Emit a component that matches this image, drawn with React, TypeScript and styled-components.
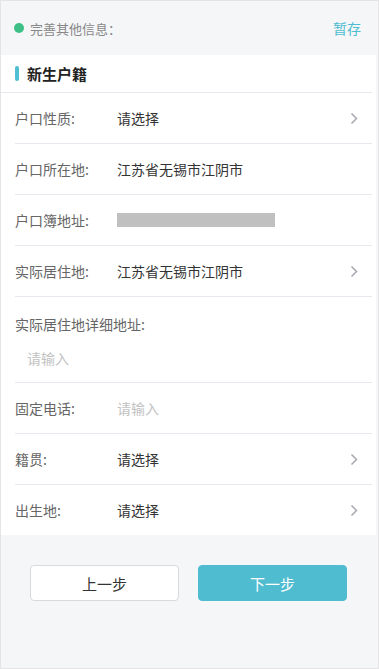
import * as React from 'react';
import styled, { createGlobalStyle } from 'styled-components';

const GlobalStyle = createGlobalStyle`
  html, body {
    margin: 0;
    padding: 0;
    background: #ffffff;
  }
  body {
    font-family: "Noto Sans CJK SC", "Noto Sans", sans-serif;
  }
  * {
    box-sizing: border-box;
  }
`;

const Page = styled.div`
  width: 379px;
  height: 669px;
  border: 1px solid #e4e4e6;
  background: #f5f6f8;
  padding-right: 2px;
  display: flex;
  flex-direction: column;
`;

const TopBar = styled.div`
  height: 54px;
  display: flex;
  align-items: center;
  justify-content: space-between;
  padding: 0 15px 0 13px;
`;

const Hint = styled.div`
  display: flex;
  align-items: center;
  font-size: 13px;
  color: #888888;
`;

const Dot = styled.span`
  width: 10px;
  height: 10px;
  border-radius: 50%;
  background: #3dbf86;
  margin-right: 6px;
`;

const SaveLink = styled.button`
  border: none;
  background: none;
  padding: 0;
  font-family: inherit;
  font-size: 14px;
  color: #4fbcd0;
  cursor: pointer;
`;

const Card = styled.div`
  background: #ffffff;
`;

const CardTitle = styled.div`
  height: 38px;
  margin-right: 4px;
  display: flex;
  align-items: center;
  padding-left: 14px;
  border-bottom: 1px solid #e8e8ee;
  font-size: 15px;
  font-weight: bold;
  color: #222222;

  &::before {
    content: '';
    width: 4px;
    height: 15px;
    border-radius: 2px;
    background: #4fbfd3;
    margin-right: 8px;
  }
`;

const Row = styled.div<{ $last?: boolean }>`
  height: ${(p) => (p.$last ? '50px' : '51px')};
  margin: 0 4px 0 14px;
  display: flex;
  align-items: center;
  padding-right: 14px;
  border-bottom: ${(p) => (p.$last ? 'none' : '1px solid #e8e8ee')};
  font-size: 14px;
`;

const Label = styled.span`
  width: 102px;
  flex-shrink: 0;
  color: #666666;
`;

const Value = styled.span<{ $placeholder?: boolean }>`
  flex: 1;
  color: ${(p) => (p.$placeholder ? '#c2c2c2' : '#333333')};
`;

const Masked = styled.span`
  width: 158px;
  height: 14px;
  background: #c0c0c0;
`;

const Block = styled.div`
  height: 86px;
  margin: 0 4px 0 14px;
  padding-top: 17px;
  border-bottom: 1px solid #e8e8ee;
  font-size: 14px;
`;

const BlockInput = styled.div`
  margin: 14px 0 0 12px;
  color: #c2c2c2;
`;

const Footer = styled.div`
  display: flex;
  gap: 19px;
  padding: 30px 29px 0 29px;
`;

const StepButton = styled.button<{ $primary?: boolean }>`
  width: 149px;
  height: 36px;
  border-radius: 4px;
  border: 1px solid ${(p) => (p.$primary ? '#4fbcd0' : '#dadada')};
  background: ${(p) => (p.$primary ? '#4fbcd0' : '#ffffff')};
  color: ${(p) => (p.$primary ? '#ffffff' : '#333333')};
  font-family: inherit;
  font-size: 15px;
  cursor: pointer;
`;

const Chevron = () => (
  <svg width="8" height="13" viewBox="0 0 8 13">
    <polyline
      points="1.5,1.5 6.5,6.5 1.5,11.5"
      fill="none"
      stroke="#a8a8b0"
      strokeWidth="1.5"
    />
  </svg>
);

const App: React.FC = () => {
  return (
    <>
      <GlobalStyle />
      <Page>
        <TopBar>
          <Hint>
            <Dot />
            完善其他信息：
          </Hint>
          <SaveLink type="button">暂存</SaveLink>
        </TopBar>
        <Card>
          <CardTitle>新生户籍</CardTitle>
          <Row>
            <Label>户口性质:</Label>
            <Value>请选择</Value>
            <Chevron />
          </Row>
          <Row>
            <Label>户口所在地:</Label>
            <Value>江苏省无锡市江阴市</Value>
          </Row>
          <Row>
            <Label>户口簿地址:</Label>
            <Masked />
          </Row>
          <Row>
            <Label>实际居住地:</Label>
            <Value>江苏省无锡市江阴市</Value>
            <Chevron />
          </Row>
          <Block>
            <Label>实际居住地详细地址:</Label>
            <BlockInput>请输入</BlockInput>
          </Block>
          <Row>
            <Label>固定电话:</Label>
            <Value $placeholder>请输入</Value>
          </Row>
          <Row>
            <Label>籍贯:</Label>
            <Value>请选择</Value>
            <Chevron />
          </Row>
          <Row $last>
            <Label>出生地:</Label>
            <Value>请选择</Value>
            <Chevron />
          </Row>
        </Card>
        <Footer>
          <StepButton type="button">上一步</StepButton>
          <StepButton type="button" $primary>
            下一步
          </StepButton>
        </Footer>
      </Page>
    </>
  );
};

export default App;
